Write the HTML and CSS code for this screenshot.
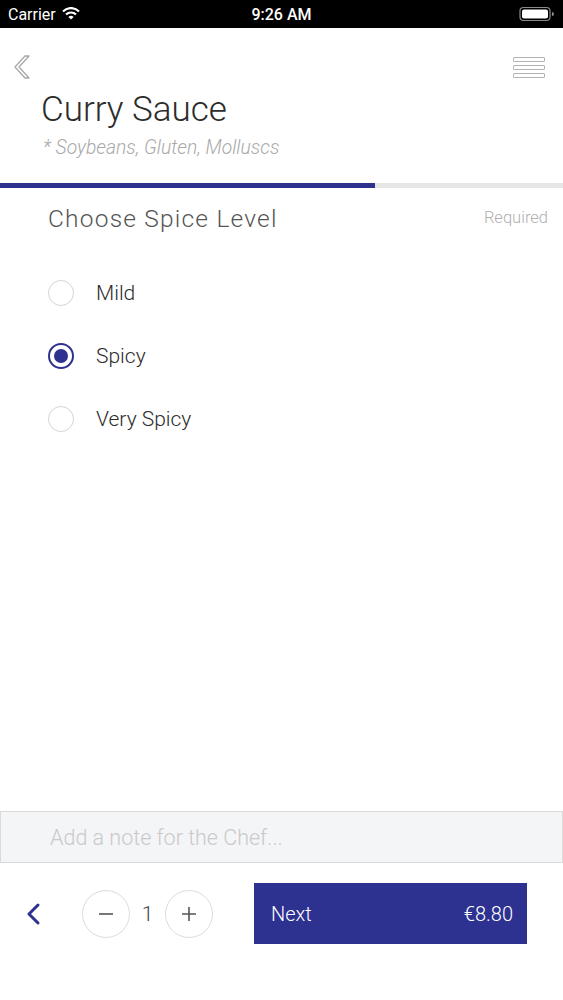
FILE: index.html
```html
<!DOCTYPE html>
<html lang="en">
<head>
    <meta charset="UTF-8">
    <meta name="viewport" content="width=device-width, initial-scale=1.0">
    <title>Curry Sauce</title>
    <link rel="stylesheet" href="styles.css">
</head>
<body>
    <div class="app">
        <div class="status-bar">
            <div class="status-left">
                <span>Carrier</span>
                <svg class="wifi" width="18" height="13" viewBox="0 0 18 13">
                    <path d="M1 4.5 A11 11 0 0 1 17 4.5" fill="none" stroke="#fff" stroke-width="2.2"/>
                    <path d="M4 7.6 A7 7 0 0 1 14 7.6" fill="none" stroke="#fff" stroke-width="2.2"/>
                    <path d="M9 12.5 L6.4 10 A3.6 3.6 0 0 1 11.6 10 Z" fill="#fff"/>
                </svg>
            </div>
            <div class="status-time">9:26 AM</div>
            <div class="status-right">
                <svg width="36" height="16" viewBox="0 0 36 16">
                    <rect x="1" y="1.5" width="30" height="13" rx="3.5" fill="none" stroke="#8a8a8a" stroke-width="1.2"/>
                    <rect x="3" y="3.5" width="26" height="9" rx="2" fill="#fff"/>
                    <path d="M33 6 Q35 6 35 8 Q35 10 33 10 Z" fill="#8a8a8a"/>
                </svg>
            </div>
        </div>

        <header class="top-nav">
            <svg class="nav-back" width="22" height="26" viewBox="0 0 22 26">
                <path d="M14 2 L4 13 L14 24 L18 24 L8 13 L18 2 Z" fill="none" stroke="#a9a9a9" stroke-width="1.3" stroke-linejoin="round"/>
            </svg>
            <div class="hamburger">
                <span></span>
                <span></span>
                <span></span>
            </div>
        </header>

        <div class="dish">
            <h1>Curry Sauce</h1>
            <p class="allergens">* Soybeans, Gluten, Molluscs</p>
        </div>

        <div class="progress">
            <div class="progress-fill" style="width: 375px"></div>
        </div>

        <div class="section-head">
            <h2>Choose Spice Level</h2>
            <span class="required">Required</span>
        </div>

        <ul class="options">
            <li><span class="radio"></span>Mild</li>
            <li class="selected"><span class="radio"></span>Spicy</li>
            <li><span class="radio"></span>Very Spicy</li>
        </ul>

        <div class="note">Add a note for the Chef...</div>

        <footer class="bottom-bar">
            <svg class="back-btn" width="18" height="24" viewBox="0 0 18 24">
                <path d="M13 3 L4 12 L13 21" fill="none" stroke="#2d3190" stroke-width="3" stroke-linecap="round" stroke-linejoin="round"/>
            </svg>
            <div class="qty">
                <span class="qty-btn">
                    <svg width="16" height="16" viewBox="0 0 16 16"><path d="M1 8 H15" stroke="#555" stroke-width="1.6"/></svg>
                </span>
                <span class="qty-num">1</span>
                <span class="qty-btn">
                    <svg width="16" height="16" viewBox="0 0 16 16"><path d="M1 8 H15 M8 1 V15" stroke="#555" stroke-width="1.6"/></svg>
                </span>
            </div>
            <div class="next-btn">
                <span>Next</span>
                <span>€8.80</span>
            </div>
        </footer>
    </div>
</body>
</html>
```

FILE: styles.css
```css
body {
    margin: 0;
    font-family: Roboto, "Liberation Sans", sans-serif;
    background: #fff;
    color: #333;
}
.app {
    width: 563px;
    height: 1000px;
    display: flex;
    flex-direction: column;
    overflow: hidden;
}
.status-bar {
    height: 28px;
    background: #000;
    color: #fff;
    display: flex;
    align-items: center;
    justify-content: space-between;
    padding: 0 8px;
    font-size: 16px;
}
.status-left {
    display: flex;
    align-items: center;
    gap: 6px;
    width: 120px;
}
.wifi {
    margin-top: -2px;
}
.status-time {
    font-weight: 500;
    font-size: 16px;
}
.status-right {
    width: 120px;
    display: flex;
    justify-content: flex-end;
}
.top-nav {
    display: flex;
    justify-content: space-between;
    align-items: flex-start;
    padding: 26px 18px 0 11px;
    height: 36px;
}
.hamburger {
    display: flex;
    flex-direction: column;
    gap: 3px;
    padding-top: 3px;
}
.hamburger span {
    display: block;
    width: 30px;
    height: 3px;
    border: 1px solid #b3b3b3;
    border-radius: 1px;
}
.dish {
    padding: 0 41px;
}
.dish h1 {
    margin: 0;
    font-weight: 300;
    font-size: 35px;
    color: #2c2c2c;
    line-height: 40px;
}
.allergens {
    margin: 6px 0 0;
    font-style: italic;
    font-weight: 300;
    font-size: 19.3px;
    color: #a9a9a9;
    padding-left: 2px;
}
.progress {
    margin-top: 24px;
    height: 5px;
    background: #e6e6e6;
}
.progress-fill {
    height: 100%;
    background: #2d3190;
}
.section-head {
    display: flex;
    justify-content: space-between;
    align-items: center;
    padding: 16px 15px 0 48px;
}
.section-head h2 {
    margin: 0;
    font-weight: 300;
    font-size: 24.5px;
    letter-spacing: 1.2px;
    color: #555;
}
.required {
    font-size: 16.5px;
    font-weight: 300;
    color: #b0b0b0;
    margin-top: -2px;
}
.options {
    list-style: none;
    margin: 0;
    padding: 28px 0 0 48px;
    flex: 1;
}
.options li {
    display: flex;
    align-items: center;
    height: 63px;
    font-size: 21px;
    font-weight: 300;
    color: #2c2c2c;
}
.radio {
    width: 24px;
    height: 24px;
    border: 1px solid #d4d4d4;
    border-radius: 50%;
    margin-right: 22px;
    box-sizing: content-box;
    display: flex;
    align-items: center;
    justify-content: center;
}
.selected .radio {
    border: 2px solid #2d3190;
    width: 22px;
    height: 22px;
}
.selected .radio::after {
    content: "";
    width: 14px;
    height: 14px;
    border-radius: 50%;
    background: #2d3190;
}
.note {
    height: 50px;
    border: 1px solid #dadada;
    background: #f4f5f7;
    display: flex;
    align-items: center;
    padding-left: 49px;
    font-size: 21.5px;
    font-weight: 300;
    color: #c9c9c9;
}
.bottom-bar {
    display: flex;
    align-items: center;
    height: 117px;
    padding: 0 0 56px 25px;
    box-sizing: border-box;
    margin-top: 20px;
}
.back-btn {
    margin-right: 39px;
}
.qty {
    display: flex;
    align-items: center;
}
.qty-btn {
    width: 46px;
    height: 46px;
    border: 1px solid #dcdcdc;
    border-radius: 50%;
    display: flex;
    align-items: center;
    justify-content: center;
}
.qty-num {
    width: 35px;
    text-align: center;
    font-size: 21px;
    font-weight: 300;
    color: #444;
}
.next-btn {
    margin-left: 41px;
    width: 273px;
    height: 61px;
    background: #2d3190;
    color: #fff;
    display: flex;
    align-items: center;
    justify-content: space-between;
    padding: 0 14px 0 17px;
    box-sizing: border-box;
    font-size: 20px;
    font-weight: 300;
}
```
